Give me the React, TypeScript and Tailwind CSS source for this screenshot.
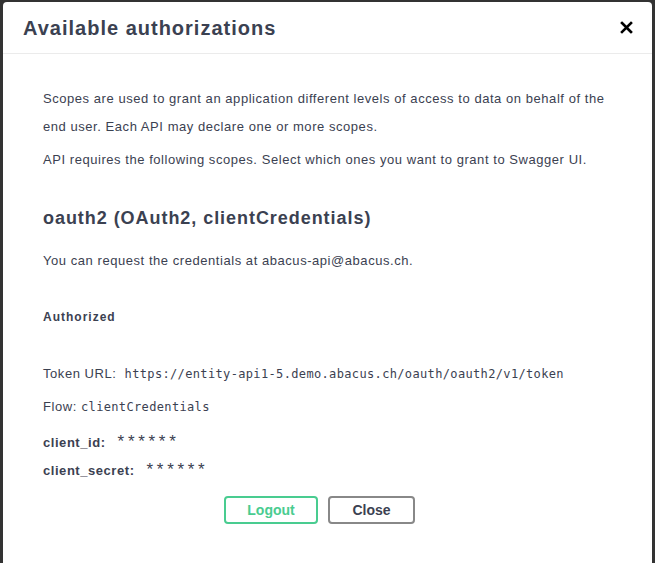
import React from 'react';

const sans = "font-['Liberation_Sans',Arial,sans-serif]";
const mono = "font-['DejaVu_Sans_Mono',monospace]";

const CloseIcon: React.FC = () => (
  <svg width="13" height="13" viewBox="0 0 13 13" aria-hidden="true">
    <path d="M2 2 L11 11 M11 2 L2 11" stroke="#000" strokeWidth="2.6" strokeLinecap="square" />
  </svg>
);

export default function App() {
  return (
    <div className={`h-[563px] w-full overflow-hidden bg-[#333333] pt-[2px] pl-[3px] ${sans}`}>
      <div className="h-[600px] w-[649px] rounded-t-[4px] bg-white text-[#3b4151]">
        {/* header */}
        <div className="flex h-[52px] items-center justify-between border-b border-[#ebebeb] pl-[20px] pr-[16px]">
          <h3 className="text-[20px] font-bold tracking-[1px]">Available authorizations</h3>
          <button className="flex h-[20px] w-[20px] items-center justify-center">
            <CloseIcon />
          </button>
        </div>

        {/* body */}
        <div className="pl-[40px] pr-[30px] pt-[31px] text-[13px] tracking-[0.55px]">
          <p className="leading-[28px]">
            Scopes are used to grant an application different levels of access to data on behalf of the end user. Each API
            may declare one or more scopes.
          </p>
          <p className="mt-[5px] leading-[28px]">
            API requires the following scopes. Select which ones you want to grant to Swagger UI.
          </p>

          <h4 className="mt-[32px] text-[18px] font-bold leading-[24px] tracking-[0.95px]">
            oauth2 (OAuth2, clientCredentials)
          </h4>
          <p className="mt-[17px] leading-[28px]">You can request the credentials at abacus-api@abacus.ch.</p>

          <h6 className="mt-[32px] text-[12px] font-bold leading-[20px] tracking-[1px]">Authorized</h6>

          <p className="mt-[37px] leading-[20px]">
            Token URL:{' '}
            <code className={`${mono} ml-[4px] text-[12px] tracking-[0.35px]`}>
              https://entity-api1-5.demo.abacus.ch/oauth/oauth2/v1/token
            </code>
          </p>
          <p className="mt-[13px] leading-[20px]">
            Flow: <code className={`${mono} text-[12px] tracking-[0.35px]`}>clientCredentials</code>
          </p>

          <div className="mt-[15px] flex items-baseline leading-[20px]">
            <label className="font-bold">client_id:</label>
            <span className="ml-[12px] text-[17px] tracking-[3.7px]">******</span>
          </div>
          <div className="mt-[7px] flex items-baseline leading-[20px]">
            <label className="font-bold">client_secret:</label>
            <span className="ml-[12px] text-[17px] tracking-[3.7px]">******</span>
          </div>
        </div>

        {/* buttons */}
        <div className="mt-[15px] flex justify-center gap-[10px] pr-[16px]">
          <button className="h-[28px] w-[94px] rounded-[4px] border-2 border-[#49cc90] text-[14px] font-bold text-[#49cc90]">
            Logout
          </button>
          <button className="h-[28px] w-[87px] rounded-[4px] border-2 border-[#888888] text-[14px] font-bold text-[#3b4151]">
            Close
          </button>
        </div>
      </div>
    </div>
  );
}
